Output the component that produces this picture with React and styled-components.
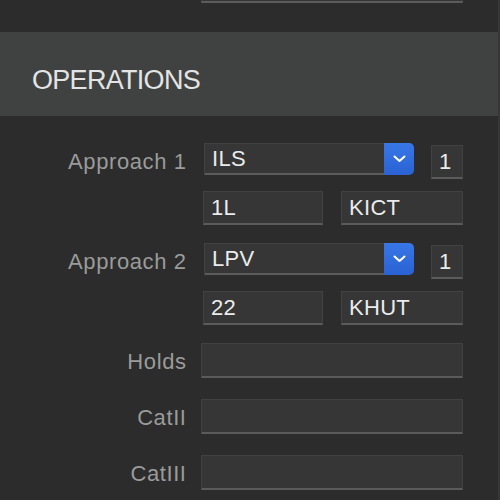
import React from "react";
import styled, { createGlobalStyle } from "styled-components";

const Global = createGlobalStyle`
  html, body { margin: 0; padding: 0; background: #2b2c2b; }
  body { font-family: "Liberation Sans", Arial, sans-serif; }
`;

const Page = styled.div`
  width: 500px;
  height: 500px;
  overflow: hidden;
  background: #2b2c2b;
  box-sizing: border-box;
  border-right: 2px solid #363736;
  display: flex;
  flex-direction: column;
`;

const TopSection = styled.div`
  height: 32px;
  padding-left: 201px;
  box-sizing: border-box;
`;

const StubField = styled.div`
  width: 262px;
  height: 3px;
  box-sizing: border-box;
  background: #353635;
  border-left: 1px solid #424342;
  border-right: 1px solid #424342;
  border-bottom: 2px solid #5a5b5a;
`;

const Header = styled.div`
  height: 84px;
  box-sizing: border-box;
  background: #404241;
  padding: 35px 0 0 32px;
`;

const Title = styled.h2`
  margin: 0;
  font-family: "Liberation Sans", Arial, sans-serif;
  font-weight: 400;
  font-size: 27px;
  line-height: 27px;
  letter-spacing: -0.7px;
  color: #e4e4e4;
`;

const Form = styled.div`
  padding-top: 27px;
  display: flex;
  flex-direction: column;
`;

const Row = styled.div`
  display: grid;
  grid-template-columns: 186px 262px;
  column-gap: 15px;
  margin-top: ${(p) => p.$gap || 0}px;
`;

const Label = styled.div`
  align-self: center;
  text-align: right;
  padding-top: 2px;
  font-size: 22px;
  line-height: 22px;
  letter-spacing: 0.6px;
  margin-right: -0.6px;
  color: #9a9b9a;
  white-space: nowrap;
`;

const Controls = styled.div`
  display: flex;
  align-items: flex-start;
`;

const Field = styled.div`
  box-sizing: border-box;
  width: ${(p) => p.$w}px;
  height: ${(p) => p.$h || 34}px;
  margin-left: ${(p) => p.$ml || 0}px;
  margin-top: ${(p) => p.$mt || 0}px;
  background: #353635;
  border: 1px solid #414241;
  border-bottom: 2px solid #5a5b5a;
  padding-left: 7px;
  display: flex;
  align-items: center;
  font-size: 22px;
  letter-spacing: 0.3px;
  color: #ebebeb;
  white-space: nowrap;
`;

const Select = styled.div`
  box-sizing: border-box;
  width: 210px;
  height: 32px;
  margin-left: 3px;
  display: flex;
  border-radius: 0 5px 5px 0;
  background: #353635;
  border-top: 1px solid #414241;
  border-left: 1px solid #414241;
`;

const SelectValue = styled.div`
  flex: 1;
  box-sizing: border-box;
  padding-left: 7px;
  border-bottom: 2px solid #5a5b5a;
  display: flex;
  align-items: center;
  font-size: 22px;
  letter-spacing: 0.3px;
  color: #ebebeb;
`;

const SelectButton = styled.div`
  width: 30px;
  margin-top: -1px;
  border-radius: 0 5px 5px 0;
  background: linear-gradient(#3877e6, #2a62d3);
  display: flex;
  align-items: center;
  justify-content: center;
`;

const Chevron = () => (
  <svg width="13" height="8" viewBox="0 0 13 8">
    <path d="M1.5 1.5 L6.5 6 L11.5 1.5" fill="none" stroke="#ffffff" strokeWidth="2" strokeLinecap="round" strokeLinejoin="round" />
  </svg>
);

const ApproachRows = ({ label, type, count, runway, airport, gap }) => (
  <>
    <Row $gap={gap}>
      <Label>{label}</Label>
      <Controls>
        <Select>
          <SelectValue>{type}</SelectValue>
          <SelectButton>
            <Chevron />
          </SelectButton>
        </Select>
        <Field $w={32} $ml={17} $mt={2}>{count}</Field>
      </Controls>
    </Row>
    <Row $gap={12}>
      <div />
      <Controls>
        <Field $w={120} $ml={2}>{runway}</Field>
        <Field $w={122} $ml={18}>{airport}</Field>
      </Controls>
    </Row>
  </>
);

export default function App() {
  return (
    <>
      <Global />
      <Page>
        <TopSection>
          <StubField />
        </TopSection>
        <Header>
          <Title>OPERATIONS</Title>
        </Header>
        <Form>
          <ApproachRows label="Approach 1" type="ILS" count="1" runway="1L" airport="KICT" gap={0} />
          <ApproachRows label="Approach 2" type="LPV" count="1" runway="22" airport="KHUT" gap={18} />
          <Row $gap={18}>
            <Label>Holds</Label>
            <Controls>
              <Field $w={262} $h={35} />
            </Controls>
          </Row>
          <Row $gap={21}>
            <Label>CatII</Label>
            <Controls>
              <Field $w={262} $h={35} />
            </Controls>
          </Row>
          <Row $gap={21}>
            <Label>CatIII</Label>
            <Controls>
              <Field $w={262} $h={35} />
            </Controls>
          </Row>
        </Form>
      </Page>
    </>
  );
}
